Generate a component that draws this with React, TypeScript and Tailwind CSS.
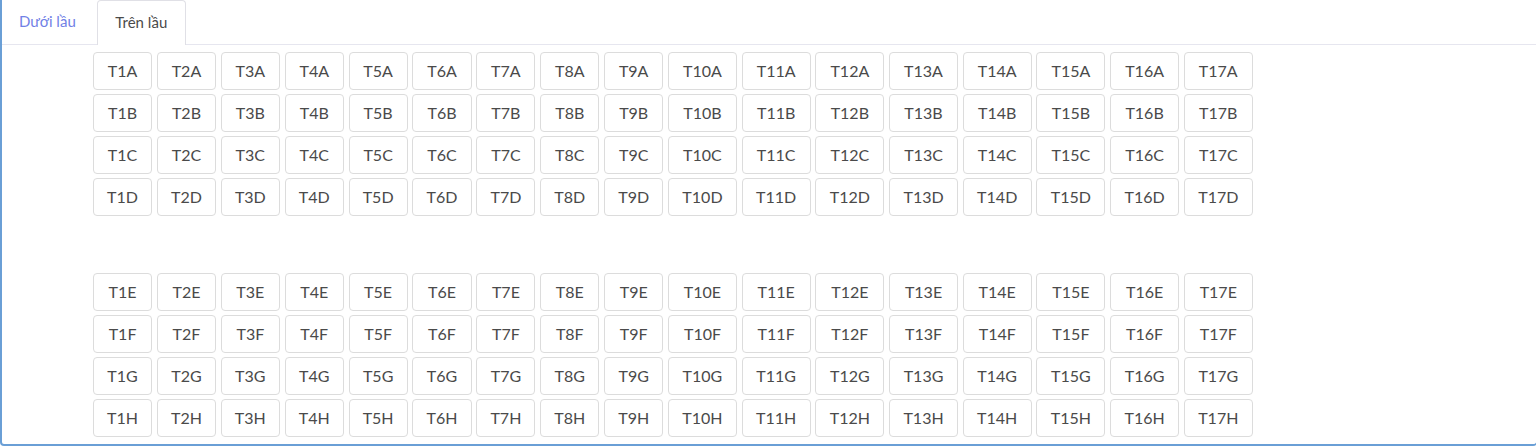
import React from "react";

const cols = Array.from({ length: 17 }, (_, i) => i + 1);
const top = ["A", "B", "C", "D"];
const bottom = ["E", "F", "G", "H"];

function Row({ letter }: { letter: string }) {
  return (
    <div className="flex gap-[4.8px]">
      {cols.map((c) => (
        <button
          key={c}
          className={`${c < 10 ? "w-[59.1px]" : "w-[68.9px]"} h-[38px] shrink-0 rounded-[4px] border border-[#dcdcdc] bg-white text-[16px] text-[#4a4a4a] flex items-center justify-center`}
        >
          T{c}
          {letter}
        </button>
      ))}
    </div>
  );
}

export default function App() {
  return (
    <div className="w-[1536px] h-[447px] bg-white overflow-hidden" style={{ fontFamily: "Lato, 'Noto Sans', sans-serif" }}>
      <div className="w-[1537px] h-[446px] border-l-2 border-b-2 border-r border-[#6a9fd6] rounded-b-[4px] overflow-hidden">
        <div className="flex h-[45px] border-b border-[#e6e6ef]">
          <div className="pl-[17px] pr-[21px] flex items-center text-[15px] text-[#7181e6] pb-[2px]">Dưới lầu</div>
          <div className="w-[89px] h-[45px] -mb-px border border-b-0 border-[#e0e0e6] rounded-t-[4px] bg-white flex items-center justify-center text-[15px] text-[#4a4a4a] pb-[2px]">
            Trên lầu
          </div>
        </div>
        <div className="pl-[91px] pt-[7px] flex flex-col gap-[4px]">
          {top.map((l) => (
            <Row key={l} letter={l} />
          ))}
          <div className="h-[49px]" />
          {bottom.map((l) => (
            <Row key={l} letter={l} />
          ))}
        </div>
      </div>
    </div>
  );
}
